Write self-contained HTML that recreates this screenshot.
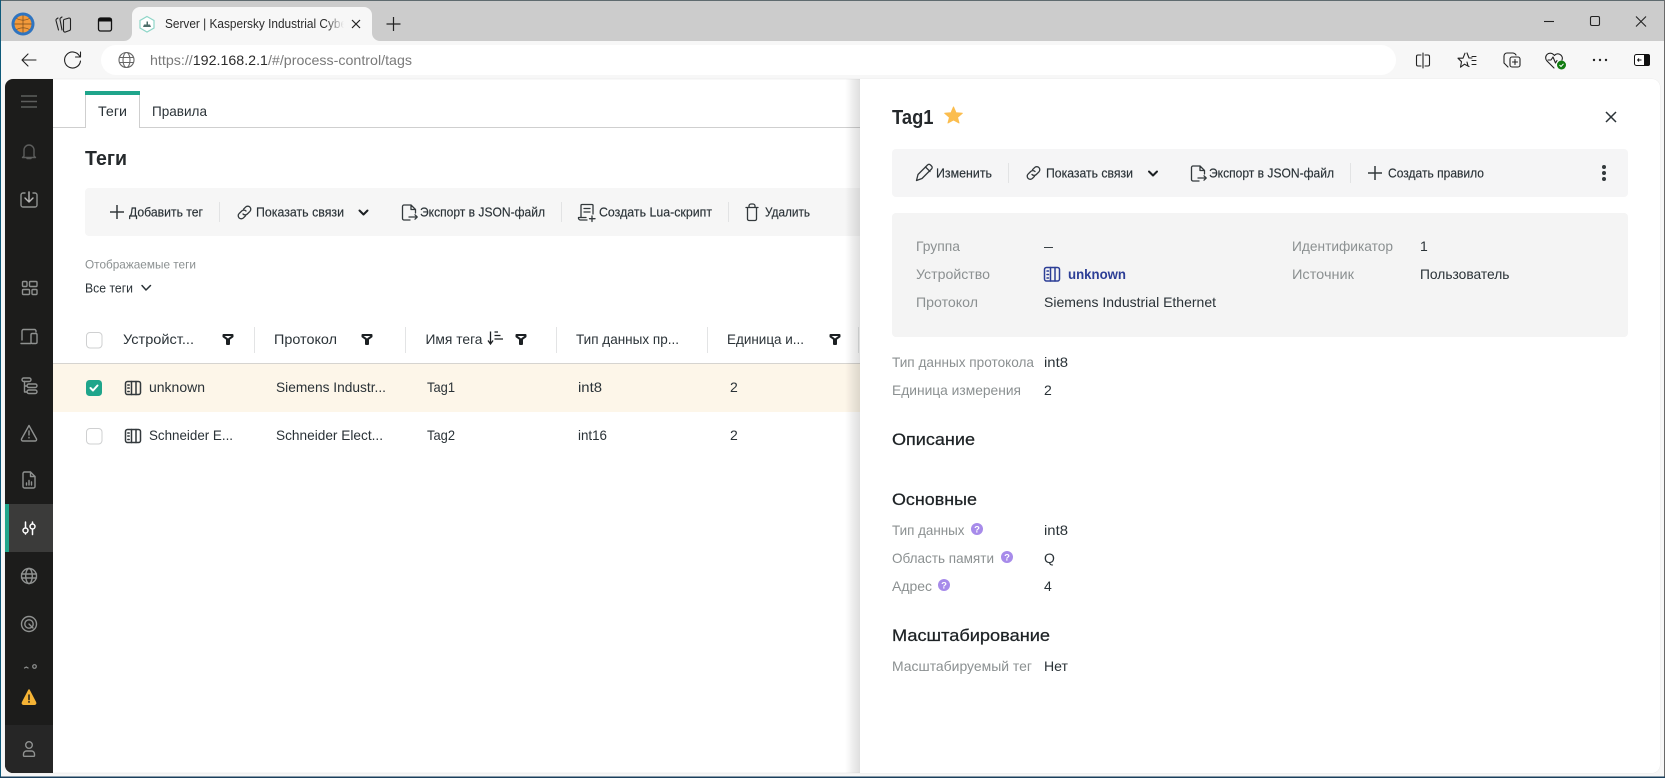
<!DOCTYPE html>
<html lang="ru"><head><meta charset="utf-8"><title>Server | Kaspersky Industrial CyberTrace</title>
<style>
html,body{margin:0;padding:0;width:1665px;height:778px;overflow:hidden;background:#f7f7f7}
svg{display:block}
text{font-family:"Liberation Sans",sans-serif;font-size:14px;fill:#2a3237;white-space:pre}
.l{fill:#8b9091}
.t{font-size:12.5px;fill:#2a3237;stroke:#2a3237;stroke-width:.15}
.h{font-size:17px;fill:#1d2225;stroke:#1d2225;stroke-width:.25}
.i{fill:none;stroke:#33393c;stroke-width:1.3;stroke-linecap:round;stroke-linejoin:round}
.s{fill:none;stroke:#8f9190;stroke-width:1.4;stroke-linecap:round;stroke-linejoin:round}
.b{fill:none;stroke:#222;stroke-width:1.1;stroke-linecap:round;stroke-linejoin:round}
</style></head><body>
<svg width="1665" height="778" viewBox="0 0 1665 778" xmlns="http://www.w3.org/2000/svg">
<defs>
<linearGradient id="sh" x1="0" x2="1"><stop offset="0" stop-color="#000" stop-opacity="0"/><stop offset="1" stop-color="#000" stop-opacity=".13"/></linearGradient>
<linearGradient id="fade" x1="0" x2="1"><stop offset="0" stop-color="#f7f7f7" stop-opacity="0"/><stop offset="1" stop-color="#f7f7f7"/></linearGradient>
<g id="flt"><path d="M-4.500-4.500H4.500V-3L1-.5V4.500H-1V-.5L-4.500-3Z" fill="#fff" stroke="#1c2023" stroke-width="2" stroke-linejoin="round"/></g>
<g id="dev" class="i" style="stroke-width:1.500"><rect x="0.500" y="0.500" width="15" height="13" rx="2"/><path d="M6.500 .5V13.500M11 .5V13.500M2.800 4H4.200M2.800 7H4.200M2.800 10.500H4.200"/></g>
<g id="link" class="i"><path d="M6.500 4.200 8.600 2.100a3 3 0 0 1 4.300 4.300l-2.600 2.600a3 3 0 0 1-4.300 0"/><path d="M8.500 10.800 6.400 12.900a3 3 0 0 1-4.300-4.300L4.700 6a3 3 0 0 1 4.300 0"/></g>
<g id="exp" class="i"><path d="M9 0H2a1.500 1.500 0 0 0-1.500 1.500v12A1.500 1.500 0 0 0 2 15h6M9 0l4.500 4.500V8M9 0v4.500h4.500M7 12h8M13 9.800 15.200 12 13 14.200"/></g>
<g id="chev"><path d="M-4-2 0 2 4-2" fill="none" stroke="#1c2023" stroke-width="2" stroke-linecap="round" stroke-linejoin="round"/></g>
<g id="plus"><path d="M7 0V14M0 7H14" stroke="#33393c" stroke-width="1.500" fill="none"/></g>
<g id="q"><circle r="6" fill="#a78bea"/><text x="0" y="3.500" text-anchor="middle" style="font-size:9.500px;font-weight:bold;fill:#fff">?</text></g>
</defs>

<!-- window chrome -->
<rect width="1665" height="778" fill="#f7f7f7"/>
<rect width="1665" height="41" fill="#cccccc"/>
<rect width="1665" height="1" fill="#5f6b6f"/>
<rect x="0" y="0" width="1" height="778" fill="#0f5a7a"/>
<rect x="1664" y="0" width="1" height="778" fill="#6a6a6a"/>
<rect x="0" y="776.500" width="1665" height="1.500" fill="#1a3f5c"/>

<!-- tab -->
<path d="M124 41a8 8 0 0 0 8-8V15a8 8 0 0 1 8-8H364a8 8 0 0 1 8 8V33a8 8 0 0 0 8 8Z" fill="#f7f7f7"/>
<circle cx="23" cy="24" r="11.500" fill="#2f74c0"/><circle cx="23" cy="24" r="8.500" fill="#f39a3b"/>
<path d="M14.500 24H31.500M23 15.500V32.500M16.500 18.500Q23 22 29.500 18.500M16.500 29.500Q23 26 29.500 29.500" fill="none" stroke="#7a4a1a" stroke-width=".7"/>
<g class="b"><path d="M58 18 56.500 19a1.500 1.500 0 0 0-.5 1.500L58.500 30"/><path d="M62 17 60.500 18a1.500 1.500 0 0 0-.5 1.500L62 30"/><path d="M64 19.500 69 18a1.500 1.500 0 0 1 1.500 1.500v9.500a1.500 1.500 0 0 1-1 1.500L65.500 32a1.500 1.500 0 0 1-2-1.500v-9.500a1.500 1.500 0 0 1 .5-1.500Z"/></g>
<rect x="98.500" y="18" width="13" height="13" rx="2" fill="none" stroke="#111" stroke-width="1.300"/><rect x="98.500" y="18" width="13" height="3.500" fill="#111"/>
<path d="M147 16.500 154 20.500V28L147 32 140 28V20.500Z" fill="#fff" stroke="#8fd6c8" stroke-width="1.200"/><path d="M143 27H151L150 24.500H148V21.500H146.500V24.500H144Z" fill="#4d6e6a"/>
<text x="165" y="28" textLength="186" lengthAdjust="spacingAndGlyphs" style="font-size:12.500px;fill:#2b2b2b">Server | Kaspersky Industrial Cyber</text>
<rect x="326" y="15" width="18" height="18" fill="url(#fade)"/><rect x="344" y="15" width="8" height="18" fill="#f7f7f7"/>
<path d="M352 20 360 28M360 20 352 28" stroke="#222" stroke-width="1.200" fill="none"/>
<path d="M393.500 17V31M386.500 24H400.500" stroke="#222" stroke-width="1.200" fill="none"/>
<!-- window buttons -->
<path d="M1544 21.500H1554" stroke="#222" stroke-width="1.100"/>
<rect x="1590.500" y="16.500" width="9" height="9" rx="1.500" fill="none" stroke="#222" stroke-width="1.100"/>
<path d="M1636 16.500 1646 26.500M1646 16.500 1636 26.500" stroke="#222" stroke-width="1.100"/>

<!-- toolbar -->
<g class="b"><path d="M22 60H36M22 60 28 54M22 60 28 66"/><path d="M79.500 56a8 8 0 1 0 1 5M80.500 52v5h-5"/></g>
<rect x="101" y="45" width="1295" height="30" rx="15" fill="#fff"/>
<g fill="none" stroke="#666" stroke-width="1.100"><circle cx="126.500" cy="60" r="7.500"/><ellipse cx="126.500" cy="60" rx="3.500" ry="7.500"/><path d="M119 57.500H134M119 62.500H134"/></g>
<text x="150" y="65" textLength="262" lengthAdjust="spacingAndGlyphs" style="font-size:14px;fill:#7a7a7a">https://<tspan style="fill:#2b2b2b">192.168.2.1</tspan>/#/process-control/tags</text>
<g class="b" style="stroke-width:1.100">
<path d="M1423 53V68M1421 55H1418a1.500 1.500 0 0 0-1.500 1.500v8a1.500 1.500 0 0 0 1.500 1.500h3M1425 55h3a1.500 1.500 0 0 1 1.500 1.500v8a1.500 1.500 0 0 1-1.500 1.500h-3"/>
<path d="M1467 53l2 5h3M1469 66.500l-4.500-2.300-4 3 1-5.500-3.500-3.500h5l2-5M1467 62l1 4M1472 56.500h4M1472 60.500h4M1472 64.500h4"/>
<path d="M1508 67l-4-4v-7a3 3 0 0 1 3-3h6a4 4 0 0 1 3 2"/><rect x="1510" y="57" width="10" height="10" rx="2"/><path d="M1515 59.500v5M1512.500 62h5"/>
<path d="M1554 68l-7-7a4.500 4.500 0 0 1 6.500-6.500l1 1 1-1a4.500 4.500 0 0 1 6.500 5.500M1548 60h3l2-3 2.500 6 1.500-2.500"/>
</g>
<circle cx="1561.500" cy="65" r="4.500" fill="#107c10"/><path d="M1559.500 65l1.500 1.500 2.500-2.700" stroke="#fff" stroke-width="1" fill="none"/>
<g fill="#222"><circle cx="1594" cy="60" r="1.200"/><circle cx="1600" cy="60" r="1.200"/><circle cx="1606" cy="60" r="1.200"/></g>
<rect x="1634.500" y="54.500" width="15" height="11" rx="2" fill="#fff" stroke="#111" stroke-width="1"/><path d="M1644 54h4a2 2 0 0 1 2 2v8a2 2 0 0 1-2 2h-4Z" fill="#111"/><path d="M1637.500 60h4M1637.500 60l1.500-1.500M1637.500 60l1.500 1.500" stroke="#111" stroke-width="1" fill="none"/>

<!-- page -->
<rect x="5" y="79" width="1655" height="694" rx="8" fill="#fff" stroke="#e6e6e6" stroke-width=".6"/>

<!-- sidebar -->
<path d="M53 79H13a8 8 0 0 0-8 8V765a8 8 0 0 0 8 8H53Z" fill="#1c1c1b"/>
<path d="M21 96H37M21 101.500H37M21 107H37" stroke="#5d5e5d" stroke-width="1.400"/>
<g class="s" style="stroke:#5d5e5d"><path d="M24 156v-6a5 5 0 0 1 10 0v6l1.500 1.500H22.500ZM27 158.500h4"/></g>
<g class="s"><path d="M25 193H23a2 2 0 0 0-2 2v10a2 2 0 0 0 2 2h12a2 2 0 0 0 2-2v-10a2 2 0 0 0-2-2h-2"/><path d="M29 192v10M25 198l4 4 4-4" style="stroke:#b7b7b6"/></g>
<g class="s"><rect x="22.500" y="281.500" width="4.500" height="5" rx="1"/><rect x="29.500" y="281.500" width="7.500" height="5" rx="1"/><rect x="22.500" y="289.500" width="7" height="5" rx="1"/><rect x="32" y="289.500" width="5" height="5" rx="1"/></g>
<g class="s"><path d="M22 340v-9a1.500 1.500 0 0 1 1.500-1.500h11a1.500 1.500 0 0 1 1.500 1.500v1M21 343.500H31"/><rect x="31" y="333.500" width="6" height="10" rx="1.200"/></g>
<g class="s"><rect x="22" y="378" width="9" height="3.500" rx="1.700"/><rect x="27" y="384" width="10" height="3.500" rx="1.700"/><rect x="27" y="390" width="10" height="3.500" rx="1.700"/><path d="M24.500 381.500V392H27M24.500 386H27"/></g>
<g class="s"><path d="M29 425.500 21.500 439a1.500 1.500 0 0 0 1.300 2H35.200a1.500 1.500 0 0 0 1.300-2Z"/><path d="M29 431v4M29 437.500v.4"/></g>
<g class="s"><path d="M30.500 472H24.500a1.500 1.500 0 0 0-1.500 1.500v13a1.500 1.500 0 0 0 1.500 1.500h9a1.500 1.500 0 0 0 1.500-1.500V476.500ZM30.500 472v4.500H35M26.500 485v-2M29 485v-4.500M31.500 485v-3"/></g>
<rect x="5" y="504" width="48" height="48" fill="#3b3b3a"/><rect x="5" y="504" width="4" height="48" fill="#1fa58b"/>
<g fill="none" stroke="#fff" stroke-width="1.500" stroke-linecap="round"><path d="M25.500 522V527.500M25.500 534V534"/><circle cx="25.500" cy="530.500" r="2.500"/><path d="M32.500 530V534.500M32.500 522V523.500"/><circle cx="32.500" cy="526.500" r="2.500"/></g>
<g class="s"><circle cx="29" cy="576" r="7.500"/><ellipse cx="29" cy="576" rx="3.300" ry="7.500"/><path d="M21.500 574H36.500M21.500 578H36.500"/></g>
<g class="s"><circle cx="29" cy="624" r="7.500"/><circle cx="29" cy="624" r="4.200"/><path d="M29 624l4 4"/></g>
<path d="M24.500 668l1.800-1 1.800 1" class="s" style="stroke-width:1.200"/><circle cx="34.500" cy="666.500" r="1.800" class="s" style="stroke-width:1.200"/>
<path d="M29 690 22.500 702.500a1.200 1.200 0 0 0 1 1.800H34.500a1.200 1.200 0 0 0 1-1.800Z" fill="#f5b335" stroke="#f5b335" stroke-width="1.500" stroke-linejoin="round"/><path d="M29 695v4.500M29 701.500v.6" stroke="#1c1c1b" stroke-width="1.500" stroke-linecap="round"/>
<path d="M5 725H53V773H13a8 8 0 0 1-8-8Z" fill="#262626"/>
<g class="s"><circle cx="29" cy="745" r="3.300"/><path d="M23.500 755.500v-1.500a3 3 0 0 1 3-3h5a3 3 0 0 1 3 3v1.500a.8.8 0 0 1-.8.8H24.300a.8.8 0 0 1-.8-.8Z"/></g>

<!-- content tabs -->
<path d="M53 127.500H860" stroke="#cfcfcf" stroke-width="1"/>
<path d="M85.500 128V92H139.500V128" fill="#fff" stroke="#cfcfcf"/><path d="M86 128H139" stroke="#fff" stroke-width="2"/>
<rect x="85" y="91" width="55" height="4" fill="#1fa58b"/>
<text x="98" y="116" textLength="29" lengthAdjust="spacingAndGlyphs">Теги</text>
<text x="152" y="116" textLength="55" lengthAdjust="spacingAndGlyphs">Правила</text>
<text x="85" y="165" textLength="42" lengthAdjust="spacingAndGlyphs" style="font-size:20px;font-weight:bold;fill:#25292c">Теги</text>

<!-- main toolbar -->
<rect x="85" y="188" width="780" height="48" rx="4" fill="#f6f6f6"/>
<use href="#plus" x="110" y="205"/>
<text class="t" x="129" y="216.500" textLength="74" lengthAdjust="spacingAndGlyphs">Добавить тег</text>
<path d="M219.500 202V222M561.500 202V222M728.500 202V222" stroke="#e2e3e4"/>
<use href="#link" x="237" y="205"/>
<text class="t" x="256" y="216.500" textLength="88" lengthAdjust="spacingAndGlyphs">Показать связи</text>
<use href="#chev" x="363.500" y="212.500"/>
<use href="#exp" x="402" y="205"/>
<text class="t" x="420" y="216.500" textLength="125" lengthAdjust="spacingAndGlyphs">Экспорт в JSON-файл</text>
<g class="i"><path d="M581 217V205.500a1 1 0 0 1 1-1H592a1 1 0 0 1 1 1V214M584 208.500H590M584 212H590M578.500 217.500H586M578.500 217.500a2 2 0 0 0 2 2.500H587M592 216v5.500M589.500 218.700h5.500"/></g>
<text class="t" x="599" y="216.500" textLength="113" lengthAdjust="spacingAndGlyphs">Создать Lua-скрипт</text>
<g class="i"><path d="M746 207.500H758M749 207.500V206a2 2 0 0 1 2-2h2a2 2 0 0 1 2 2v1.500M747.500 207.500V219a1.500 1.500 0 0 0 1.500 1.500h6a1.500 1.500 0 0 0 1.500-1.500V207.500"/></g>
<text class="t" x="765" y="216.500" textLength="45" lengthAdjust="spacingAndGlyphs">Удалить</text>

<!-- filter -->
<text x="85" y="268.500" textLength="111" lengthAdjust="spacingAndGlyphs" class="l" style="font-size:12px">Отображаемые теги</text>
<text x="85" y="292.500" textLength="48" lengthAdjust="spacingAndGlyphs" style="font-size:13px">Все теги</text>
<path d="M142 285.500 146 290 150.500 285.500" fill="none" stroke="#2a3237" stroke-width="1.500" stroke-linecap="round" stroke-linejoin="round"/>

<!-- table header -->
<rect x="86.500" y="332.500" width="15.500" height="15.500" rx="3.500" fill="#fff" stroke="#cfd0d1"/>
<text x="123" y="344" textLength="71" lengthAdjust="spacingAndGlyphs">Устройст...</text>
<use href="#flt" x="228" y="339.500"/>
<path d="M254.500 327V353M405.500 327V353M556.500 327V353M707.500 327V353M858.500 327V353" stroke="#e3e4e5"/>
<text x="274" y="344" textLength="63" lengthAdjust="spacingAndGlyphs">Протокол</text>
<use href="#flt" x="367" y="339.500"/>
<text x="425.500" y="344" textLength="57" lengthAdjust="spacingAndGlyphs">Имя тега</text>
<path d="M490.500 331.500V343.500M488 340.500 490.500 344 493 340.500M494.500 332H498M494.500 335.500H500.500M494.500 339H503" fill="none" stroke="#1c2023" stroke-width="1.300"/>
<use href="#flt" x="521" y="339.500"/>
<text x="576" y="344" textLength="103" lengthAdjust="spacingAndGlyphs">Тип данных пр...</text>
<text x="727" y="344" textLength="77" lengthAdjust="spacingAndGlyphs">Единица и...</text>
<use href="#flt" x="835" y="339.500"/>
<path d="M53 363.500H860" stroke="#d6d4d0" stroke-width="1"/>

<!-- row 1 -->
<rect x="53" y="364" width="807" height="48" fill="#fdf6e9"/>
<rect x="86" y="380" width="16" height="16" rx="3.500" fill="#1fa58b"/>
<path d="M90.500 388 93 390.500 97.500 385.500" fill="none" stroke="#fff" stroke-width="2" stroke-linecap="round" stroke-linejoin="round"/>
<use href="#dev" x="125" y="381"/>
<text x="149" y="392" textLength="56" lengthAdjust="spacingAndGlyphs">unknown</text>
<text x="276" y="392" textLength="110" lengthAdjust="spacingAndGlyphs">Siemens Industr...</text>
<text x="427" y="392" textLength="28" lengthAdjust="spacingAndGlyphs">Tag1</text>
<text x="578" y="392" textLength="24" lengthAdjust="spacingAndGlyphs">int8</text>
<text x="730" y="392">2</text>
<!-- row 2 -->
<rect x="86.500" y="428.500" width="15.500" height="15.500" rx="3.500" fill="#fff" stroke="#cfd0d1"/>
<use href="#dev" x="125" y="429"/>
<text x="149" y="440" textLength="84" lengthAdjust="spacingAndGlyphs">Schneider E...</text>
<text x="276" y="440" textLength="107" lengthAdjust="spacingAndGlyphs">Schneider Elect...</text>
<text x="427" y="440" textLength="28" lengthAdjust="spacingAndGlyphs">Tag2</text>
<text x="578" y="440" textLength="29" lengthAdjust="spacingAndGlyphs">int16</text>
<text x="730" y="440">2</text>

<!-- panel -->
<rect x="845" y="79" width="15" height="694" fill="url(#sh)"/>
<path d="M860 79H1652a8 8 0 0 1 8 8V765a8 8 0 0 1-8 8H860Z" fill="#fff"/>
<text x="892" y="124" textLength="41.500" lengthAdjust="spacingAndGlyphs" style="font-size:20px;font-weight:bold;fill:#25292c">Tag1</text>
<path d="M953.500 107 956 112.800 962.300 113.300 957.500 117.400 959 123 953.500 119.900 948 123 949.500 117.400 944.700 113.300 951 112.800Z" fill="#fbbd4e" stroke="#fbbd4e" stroke-linejoin="round"/>
<path d="M1606 112 1616 122M1616 112 1606 122" stroke="#2a3237" stroke-width="1.500" fill="none"/>

<rect x="892" y="149" width="736" height="48" rx="4" fill="#f5f5f6"/>
<g class="i"><path d="M916.500 180.500 918 174.500 927.500 165a2 2 0 0 1 3 0l1 1a2 2 0 0 1 0 3L922 178.500Z"/><path d="M925.500 167 930 171.500"/></g>
<text class="t" x="936" y="177.500" textLength="56" lengthAdjust="spacingAndGlyphs">Изменить</text>
<path d="M1008.500 163V183M1350.500 163V183" stroke="#e2e3e4"/>
<use href="#link" x="1026" y="165.500"/>
<text class="t" x="1046" y="177.500" textLength="87" lengthAdjust="spacingAndGlyphs">Показать связи</text>
<use href="#chev" x="1153" y="173.500"/>
<use href="#exp" x="1191" y="166"/>
<text class="t" x="1209" y="177.500" textLength="125" lengthAdjust="spacingAndGlyphs">Экспорт в JSON-файл</text>
<use href="#plus" x="1368" y="166"/>
<text class="t" x="1388" y="177.500" textLength="96" lengthAdjust="spacingAndGlyphs">Создать правило</text>
<g fill="#33393c"><circle cx="1604" cy="167" r="2"/><circle cx="1604" cy="173" r="2"/><circle cx="1604" cy="179" r="2"/></g>

<rect x="892" y="213" width="736" height="124" rx="4" fill="#f4f4f4"/>
<text class="l" x="916" y="251" textLength="44" lengthAdjust="spacingAndGlyphs">Группа</text>
<text x="1044" y="251" textLength="9" lengthAdjust="spacingAndGlyphs">–</text>
<text class="l" x="1292" y="251" textLength="101" lengthAdjust="spacingAndGlyphs">Идентификатор</text>
<text x="1420" y="251">1</text>
<text class="l" x="916" y="279" textLength="74" lengthAdjust="spacingAndGlyphs">Устройство</text>
<g class="i" style="stroke:#2c3e96;stroke-width:1.500"><rect x="1044.500" y="267.500" width="15" height="13.500" rx="2"/><path d="M1050.500 267.500V281M1055 267.500V281M1047 271H1048.500M1047 274.500H1048.500M1047 278H1048.500"/></g>
<text x="1068" y="279" textLength="58" lengthAdjust="spacingAndGlyphs" style="fill:#2c3e96;font-weight:bold">unknown</text>
<text class="l" x="1292" y="279" textLength="62" lengthAdjust="spacingAndGlyphs">Источник</text>
<text x="1420" y="279" textLength="89.500" lengthAdjust="spacingAndGlyphs">Пользователь</text>
<text class="l" x="916" y="307" textLength="62" lengthAdjust="spacingAndGlyphs">Протокол</text>
<text x="1044" y="307" textLength="172" lengthAdjust="spacingAndGlyphs">Siemens Industrial Ethernet</text>

<text class="l" x="892" y="367" textLength="142" lengthAdjust="spacingAndGlyphs">Тип данных протокола</text>
<text x="1044" y="367" textLength="24" lengthAdjust="spacingAndGlyphs">int8</text>
<text class="l" x="892" y="395" textLength="129" lengthAdjust="spacingAndGlyphs">Единица измерения</text>
<text x="1044" y="395">2</text>
<text class="h" x="892" y="445" textLength="83" lengthAdjust="spacingAndGlyphs">Описание</text>
<text class="h" x="892" y="505" textLength="85" lengthAdjust="spacingAndGlyphs">Основные</text>
<text class="l" x="892" y="535" textLength="72.500" lengthAdjust="spacingAndGlyphs">Тип данных</text>
<use href="#q" x="977" y="529"/>
<text x="1044" y="535" textLength="24" lengthAdjust="spacingAndGlyphs">int8</text>
<text class="l" x="892" y="563" textLength="102" lengthAdjust="spacingAndGlyphs">Область памяти</text>
<use href="#q" x="1007" y="557"/>
<text x="1044" y="563">Q</text>
<text class="l" x="892" y="591" textLength="40" lengthAdjust="spacingAndGlyphs">Адрес</text>
<use href="#q" x="944" y="585"/>
<text x="1044" y="591">4</text>
<text class="h" x="892" y="641" textLength="158" lengthAdjust="spacingAndGlyphs">Масштабирование</text>
<text class="l" x="892" y="671" textLength="140" lengthAdjust="spacingAndGlyphs">Масштабируемый тег</text>
<text x="1044" y="671" textLength="24" lengthAdjust="spacingAndGlyphs">Нет</text>
</svg>
</body></html>
